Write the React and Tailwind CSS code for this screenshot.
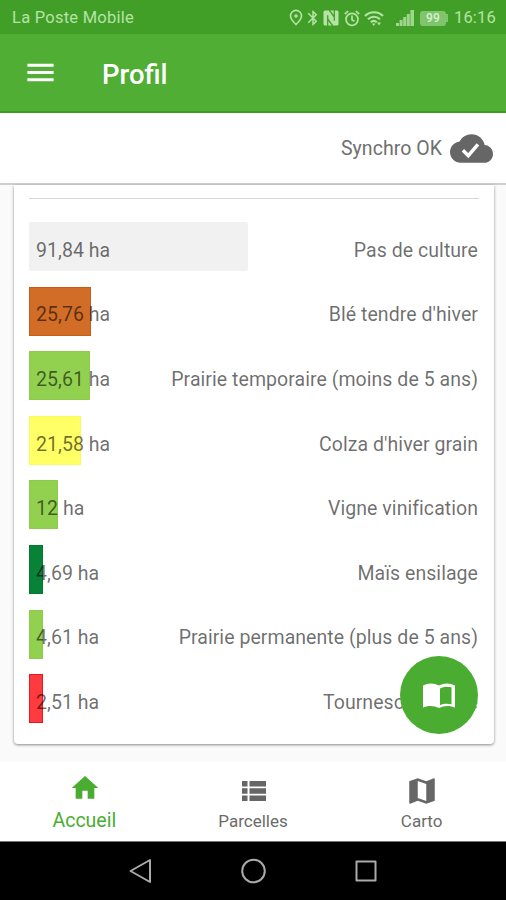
import { MdHome, MdMap, MdMenu, MdBluetooth } from 'react-icons/md';

const cultures = [
  { area: '91,84 ha', name: 'Pas de culture', bar: 'w-[219px] bg-[#f1f1f1] rounded-xs' },
  { area: '25,76 ha', name: "Blé tendre d'hiver", bar: 'w-[62px] bg-[#d26d27] border border-[#c65f14]' },
  { area: '25,61 ha', name: 'Prairie temporaire (moins de 5 ans)', bar: 'w-[61px] bg-[#92d050] border border-[#8bcb48]' },
  { area: '21,58 ha', name: "Colza d'hiver grain", bar: 'w-[52px] bg-[#ffff66] border border-[#fbfb58]' },
  { area: '12 ha', name: 'Vigne vinification', bar: 'w-[29px] bg-[#92d050] border border-[#8bcb48]' },
  { area: '4,69 ha', name: 'Maïs ensilage', bar: 'w-[14px] bg-[#088237] border border-[#007a2c]' },
  { area: '4,61 ha', name: 'Prairie permanente (plus de 5 ans)', bar: 'w-[14px] bg-[#92d050] border border-[#8bcb48]' },
  { area: '2,51 ha', name: 'Tournesol oléique', bar: 'w-[14px] bg-[#ff3b40] border border-[#e8161e]' },
];

function StatusBar() {
  return (
    <div className="flex h-[34px] shrink-0 items-center bg-[#419f27] pl-3 pr-[10px] pt-[2px] text-[#b5e3a6]">
      <span className="text-[16.5px] tracking-[0.25px]">La Poste Mobile</span>
      <div className="ml-auto flex items-center">
        <svg width="14" height="18" viewBox="0 0 14 18" fill="none" stroke="currentColor" strokeWidth="1.6">
          <path d="M7 15.500C4 12.500 1.500 9.500 1.500 6.900a5.500 5.500 0 0 1 11 0C12.500 9.500 10 12.500 7 15.500z" />
          <circle cx="7" cy="7" r="1.800" fill="currentColor" stroke="none" />
        </svg>
        <MdBluetooth className="ml-px h-[18px] w-[18px]" />
        <svg className="ml-px" width="16" height="16" viewBox="0 0 16 16">
          <rect x=".5" y=".5" width="15" height="15" rx="1.500" fill="currentColor" />
          <path d="M4.700 16V5.200M11.300 0v10.800M6.200 0l5.100 7M4.700 9l5.100 7" fill="none" stroke="#419f27" strokeWidth="1.300" />
        </svg>
        <svg className="ml-[5px]" width="16" height="17" viewBox="0 0 16 17" fill="none" stroke="currentColor" strokeWidth="1.700">
          <circle cx="8" cy="9.300" r="6" />
          <path d="M8 5.500v4.200l2.500 1.600M.8 4l3.400-2.900M15.200 4l-3.400-2.900" />
        </svg>
        <svg className="ml-[4px]" width="20" height="17" viewBox="0 0 20 17" fill="none" stroke="currentColor" strokeWidth="2.200">
          <path d="M1 6C6 1 14 1 19 6M4 9.200c3.500-3.300 8.500-3.300 12 0M6.800 12.200c1.800-1.600 4.200-1.600 6 0" />
          <path d="M8 13.500h3.500L9.700 16zM13 12.500l2 3 2-3z" fill="currentColor" stroke="none" />
        </svg>
        <svg className="ml-[12px]" width="18" height="16" viewBox="0 0 18 16" fill="currentColor">
          <path d="M0 16v-3h3v3zM3.600 16v-6h3v6zM7.200 16V7h3v9zM10.800 16V4h3v12zM14.400 16V0H18v16z" opacity=".8" />
        </svg>
        <div className="ml-[6px] flex h-[15px] w-[26px] items-center justify-center rounded-[3px] bg-[#80c46e] text-[12px] font-medium leading-none text-[#d6f2cc]">
          99
        </div>
        <div className="h-[8px] w-[2px] bg-[#80c46e]" />
        <span className="ml-[6px] text-[16.5px] tracking-[0.2px]">16:16</span>
      </div>
    </div>
  );
}

function SyncBar() {
  return (
    <div className="flex h-[72px] shrink-0 items-center justify-end border-b-2 border-[#cfcfcf] bg-white pr-[13px] text-[#707070]">
      <span className="pt-px text-[19.500px] tracking-[0.05px]">Synchro OK</span>
      <svg className="ml-[8px]" width="43" height="43" viewBox="0 0 24 24">
        <path
          fill="#666"
          d="M19.350 10.040C18.670 6.590 15.640 4 12 4 9.110 4 6.600 5.640 5.350 8.040 2.340 8.360 0 10.910 0 14c0 3.310 2.690 6 6 6h13c2.760 0 5-2.240 5-5 0-2.640-2.050-4.780-4.650-4.960z"
        />
        <path d="M7.200 13l3 3 5.400-6.300" fill="none" stroke="#fff" strokeWidth="1.900" />
      </svg>
    </div>
  );
}

function CultureRow({ area, name, bar }) {
  return (
    <div className="grid h-[49px] grid-cols-1 text-[19.500px] tracking-[0.05px]">
      <div className={`col-start-1 row-start-1 h-[49px] ${bar}`} />
      <div className="col-start-1 row-start-1 flex items-center justify-between pl-[7px] pr-px pt-[8px] text-black/58">
        <span>{area}</span>
        <span>{name}</span>
      </div>
    </div>
  );
}

function BottomNav() {
  return (
    <nav className="grid h-[79px] shrink-0 grid-cols-3 bg-white text-[17px] text-[#6b6b6b]">
      <div className="flex flex-col items-center pt-[10px] text-[#4aad31]">
        <MdHome className="ml-px h-8 w-8" />
        <span className="mt-[3px] text-[19.500px] leading-7">Accueil</span>
      </div>
      <div className="flex flex-col items-center pt-[12px]">
        <svg className="ml-[2px] h-[34px] w-[34px]" viewBox="0 0 34 34" fill="#666">
          <path d="M5 7h5.500v5.500H5zM5 14.200h5.500v5.500H5zM5 21.400h5.500v5.500H5zM12.500 7H29v5.500H12.500zM12.500 14.200H29v5.500H12.500zM12.500 21.400H29v5.500H12.500z" />
        </svg>
        <span className="-mt-px leading-7">Parcelles</span>
      </div>
      <div className="flex flex-col items-center pt-[12px]">
        <MdMap className="ml-px h-[34px] w-[34px] text-[#666]" />
        <span className="-mt-px leading-7">Carto</span>
      </div>
    </nav>
  );
}

function SystemNav() {
  return (
    <div className="flex h-[59px] shrink-0 items-center justify-center gap-[88px] border-t border-[#777] bg-black text-[#aaa]">
      <svg width="24" height="26" viewBox="0 0 24 26" fill="none" stroke="currentColor" strokeWidth="2" strokeLinejoin="round">
        <path d="M22 2v22L2.500 13z" />
      </svg>
      <svg width="26" height="26" viewBox="0 0 26 26" fill="none" stroke="currentColor" strokeWidth="2">
        <circle cx="13.500" cy="13" r="11.300" />
      </svg>
      <svg width="24" height="24" viewBox="0 0 24 24" fill="none" stroke="currentColor" strokeWidth="2" strokeLinejoin="round">
        <path d="M2.500 2.500h19v19h-19z" />
      </svg>
    </div>
  );
}

export default function App() {
  return (
    <div className="relative flex h-[900px] w-[506px] flex-col overflow-hidden bg-[#fafafa] font-['Roboto',sans-serif]">
      <StatusBar />
      <header className="flex h-[79px] shrink-0 items-center border-b-2 border-[#3f9a26] bg-[#4fae33] pl-[23px] text-white">
        <MdMenu className="h-[35px] w-[35px]" />
        <h1 className="ml-[44px] pt-[5px] text-[27.500px] font-medium">Profil</h1>
      </header>
      <SyncBar />

      <main className="flex-1 pl-[14px] pr-[12px]">
        <section className="h-[559px] rounded-b-[4px] bg-white pl-[15px] pr-[15px] pt-[13px] shadow-[0_1px_3px_rgba(0,0,0,0.45)]">
          <div className="h-px bg-[#d4d4d4]" />
          <div className="mt-[23px] flex flex-col gap-[15.600px]">
            {cultures.map((c) => (
              <CultureRow key={c.name} {...c} />
            ))}
          </div>
        </section>
      </main>

      <button className="absolute left-[400px] top-[656px] flex h-[78px] w-[78px] items-center justify-center rounded-full bg-[#4aad31] pt-[2px]">
        <svg width="32" height="26" viewBox="0 0 32 26">
          <path d="M0 2.500C5-.3 11-.3 16 2.500 21-.3 27-.3 32 2.500v22c-5-2.200-11-2.200-16 .5-5-2.700-11-2.700-16-.5z" fill="#fff" />
          <path d="M17 5.500c3.500-2 7.500-2.200 11.500-1.200v16.900c-4-.9-8-.6-11.500 1z" fill="#4aad31" />
        </svg>
      </button>

      <BottomNav />
      <SystemNav />
    </div>
  );
}
